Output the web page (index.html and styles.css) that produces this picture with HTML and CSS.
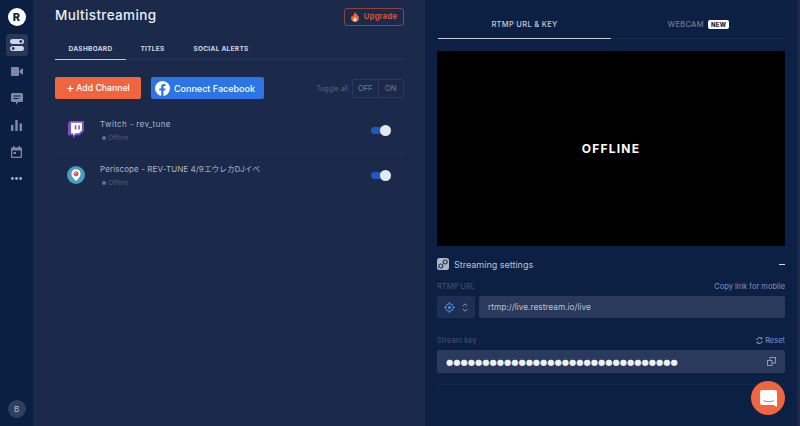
FILE: index.html
```html
<!DOCTYPE html>
<html lang="en">
<head>
    <meta charset="UTF-8">
    <meta name="viewport" content="width=device-width, initial-scale=1.0">
    <title>Multistreaming</title>
    <link rel="stylesheet" href="styles.css">
</head>
<body>
    <div class="app">
        <nav class="sidebar">
            <div class="logo">R</div>
            <a class="nav-item active">
                <svg width="14" height="12" viewBox="0 0 14 12"><rect x="0" y="0" width="14" height="5" rx="2.5" fill="#cfd5e2"/><rect x="0" y="7" width="14" height="5" rx="2.5" fill="#cfd5e2"/><circle cx="10.8" cy="2.5" r="1.4" fill="#26375a"/><circle cx="3.2" cy="9.5" r="1.4" fill="#26375a"/></svg>
            </a>
            <a class="nav-item">
                <svg width="12" height="9" viewBox="0 0 12 9"><rect x="0" y="0" width="8" height="9" rx="1" fill="#7e8aa3"/><path d="M8.6 3.4 12 1v7L8.6 5.6z" fill="#7e8aa3"/></svg>
            </a>
            <a class="nav-item">
                <svg width="12" height="12" viewBox="0 0 12 12"><path d="M1.5 0h9A1.5 1.5 0 0 1 12 1.5v6A1.5 1.5 0 0 1 10.5 9H7l-2 3V9H1.5A1.5 1.5 0 0 1 0 7.5v-6A1.5 1.5 0 0 1 1.5 0z" fill="#7e8aa3"/><path d="M2.5 3h7M2.5 5.5h5" stroke="#0c1f42" stroke-width="1"/></svg>
            </a>
            <a class="nav-item">
                <svg width="11" height="11" viewBox="0 0 11 11"><rect x="0" y="5" width="2.4" height="6" fill="#7e8aa3"/><rect x="4.3" y="0" width="2.4" height="11" fill="#7e8aa3"/><rect x="8.6" y="3.5" width="2.4" height="7.5" fill="#7e8aa3"/></svg>
            </a>
            <a class="nav-item">
                <svg width="11" height="12" viewBox="0 0 11 12"><path d="M1 1.5h9a1 1 0 0 1 1 1V11a1 1 0 0 1-1 1H1a1 1 0 0 1-1-1V2.5a1 1 0 0 1 1-1z" fill="#7e8aa3"/><rect x="2" y="0" width="1.5" height="2.5" fill="#7e8aa3"/><rect x="7.5" y="0" width="1.5" height="2.5" fill="#7e8aa3"/><rect x="1.3" y="4.5" width="8.4" height="6.2" fill="#0c1f42"/><rect x="2.5" y="6" width="2.5" height="2" fill="#7e8aa3"/></svg>
            </a>
            <a class="nav-item">
                <svg width="11" height="3" viewBox="0 0 11 3"><circle cx="1.4" cy="1.5" r="1.4" fill="#aab3c5"/><circle cx="5.5" cy="1.5" r="1.4" fill="#aab3c5"/><circle cx="9.6" cy="1.5" r="1.4" fill="#aab3c5"/></svg>
            </a>
            <div class="avatar">B</div>
        </nav>

        <main class="main">
            <header class="main-header">
                <h1>Multistreaming</h1>
                <a class="upgrade">
                    <svg width="8" height="10" viewBox="0 0 8 10"><path d="M4 0c.4 1.8 4 3.4 4 6.2C8 8.4 6.2 10 4 10S0 8.4 0 6.2C0 5 .7 4 1.4 3.4c.1.8.5 1.2 1 1.3C2.2 3 3 1.2 4 0z" fill="#f0653c"/><path d="M4 5c.3.8 1.6 1.4 1.6 2.7C5.6 8.7 4.9 9.3 4 9.3s-1.6-.6-1.6-1.6C2.4 6.5 3.6 6 4 5z" fill="#f9dcb8"/></svg>
                    Upgrade
                </a>
            </header>

            <div class="tabs">
                <a class="tab active">DASHBOARD</a>
                <a class="tab">TITLES</a>
                <a class="tab">SOCIAL ALERTS</a>
            </div>

            <div class="actions">
                <button class="btn btn-add"><span class="plus">+</span>Add Channel</button>
                <button class="btn btn-fb">
                    <svg width="15" height="15" viewBox="0 0 15 15"><circle cx="7.5" cy="7.5" r="7.5" fill="#fff"/><path d="M8.4 15V9.5h1.8l.3-2.1H8.4V6.1c0-.6.3-1.1 1.2-1.1h.9V3.2s-.8-.1-1.6-.1c-1.7 0-2.7 1-2.7 2.8v1.500H4.300v2.100h1.900V15z" fill="#2d74e4"/></svg>
                    Connect Facebook
                </button>
                <div class="toggle-all">
                    <span>Toggle all</span>
                    <div class="switch-group"><a>OFF</a><a>ON</a></div>
                </div>
            </div>

            <ul class="channels">
                <li class="channel">
                    <svg class="channel-icon" width="17" height="18" viewBox="0 0 17 18"><path d="M2.5 0H17v10l-4.5 4.200H9L6 17.500v-3.300H1V3z" fill="#7b4fd0"/><path d="M4 1.800h11v7.500l-3 2.900H8.500L6 14.500v-2.300H4z" fill="#fff"/><rect x="7.8" y="4.3" width="1.5" height="4.2" fill="#7b4fd0"/><rect x="11.3" y="4.3" width="1.5" height="4.2" fill="#7b4fd0"/></svg>
                    <div class="channel-info">
                        <div class="channel-name">Twitch - rev_tune</div>
                        <div class="channel-status"><i></i>Offline</div>
                    </div>
                    <div class="toggle"><i></i></div>
                </li>
                <li class="channel">
                    <svg class="channel-icon" width="18" height="18" viewBox="0 0 18 18"><circle cx="9" cy="9" r="9" fill="#4b9cc0"/><path d="M9 3.2c2.7 0 4.6 2 4.6 4.5C13.6 10.500 10.500 13.500 9 15 7.500 13.500 4.400 10.500 4.400 7.700 4.400 5.200 6.300 3.200 9 3.200z" fill="#fff"/><circle cx="9" cy="7.800" r="2.500" fill="#e0574f"/><circle cx="8.200" cy="7" r=".8" fill="#fff"/></svg>
                    <div class="channel-info">
                        <div class="channel-name tight">Periscope - REV-TUNE 4/9<span class="jp">エウレカDJイベ</span></div>
                        <div class="channel-status"><i></i>Offline</div>
                    </div>
                    <div class="toggle"><i></i></div>
                </li>
            </ul>
        </main>

        <section class="panel">
            <div class="panel-tabs">
                <a class="panel-tab active">RTMP URL &amp; KEY</a>
                <a class="panel-tab">WEBCAM <span class="badge">NEW</span></a>
            </div>

            <div class="video">OFFLINE</div>

            <div class="settings-head">
                <svg width="12" height="12" viewBox="0 0 12 12"><rect width="12" height="12" rx="2.5" fill="#aeb6c6"/><circle cx="3.8" cy="8" r="2" fill="none" stroke="#26375a" stroke-width="1.2"/><circle cx="8.2" cy="4" r="2" fill="none" stroke="#26375a" stroke-width="1.2"/></svg>
                <span>Streaming settings</span>
                <i class="collapse"></i>
            </div>

            <div class="field-head">
                <label>RTMP URL</label>
                <a>Copy link for mobile</a>
            </div>
            <div class="url-row">
                <div class="server-select">
                    <svg width="11" height="11" viewBox="0 0 11 11"><circle cx="5.5" cy="5.5" r="3.8" fill="none" stroke="#4f8fe8" stroke-width="1"/><circle cx="5.5" cy="5.5" r="1.5" fill="#4f8fe8"/><path d="M5.5 0v2M5.5 9v2M0 5.5h2M9 5.5h2" stroke="#4f8fe8" stroke-width="1"/></svg>
                    <svg width="6" height="9" viewBox="0 0 6 9"><path d="M.8 3 3 .8 5.2 3M.8 6 3 8.2 5.2 6" fill="none" stroke="#8f99ad" stroke-width="1"/></svg>
                </div>
                <div class="input">rtmp://live.restream.io/live</div>
            </div>

            <div class="field-head key-head">
                <label>Stream key</label>
                <a class="reset">
                    <svg width="7" height="7" viewBox="0 0 7 7"><path d="M.7 3A2.9 2.9 0 0 1 5.7 1.5M6.3 4A2.9 2.9 0 0 1 1.3 5.5" fill="none" stroke="#8ea5d2" stroke-width="1"/><path d="M6.3 0v2.3H4zM.7 7V4.7H3z" fill="#8ea5d2"/></svg>
                    Reset
                </a>
            </div>
            <div class="input key-input">
                <span class="dots">●●●●●●●●●●●●●●●●●●●●●●●●●●●●●●●●</span>
                <svg width="9" height="9" viewBox="0 0 9 9"><rect x="3" y=".5" width="5.5" height="5.5" fill="none" stroke="#8f99ad" stroke-width="1"/><rect x=".5" y="3.5" width="4.5" height="5" fill="#2a3a5c" stroke="#8f99ad" stroke-width="1"/></svg>
            </div>
            <div class="panel-rule"></div>
        </section>
    </div>

    <a class="chat">
        <svg width="17" height="17" viewBox="0 0 17 17"><path d="M2 0h13a2 2 0 0 1 2 2v15l-3.5-2H2a2 2 0 0 1-2-2V2a2 2 0 0 1 2-2z" fill="#fff"/><path d="M3.5 10.5c3 1.6 7 1.6 10 0" fill="none" stroke="#ee6540" stroke-width="1"/></svg>
    </a>
</body>
</html>
```

FILE: styles.css
```css
* {
    box-sizing: border-box;
}

html, body {
    height: 100%;
}

body {
    margin: 0;
    overflow: hidden;
    background: #1b2a4a;
    font-family: Inter, "Noto Sans CJK JP", sans-serif;
    color: #fff;
}

ul {
    list-style: none;
    margin: 0;
    padding: 0;
}

.app {
    display: flex;
    height: 426px;
}

/* left icon rail */
.sidebar {
    width: 33px;
    flex-shrink: 0;
    display: flex;
    flex-direction: column;
    align-items: center;
    padding-top: 8px;
    background: #0b1f42;
}

.logo {
    width: 18px;
    height: 18px;
    margin-bottom: 8px;
    border-radius: 50%;
    background: #fff;
    color: #0b1f42;
    font-size: 11px;
    font-weight: 800;
    line-height: 18px;
    text-align: center;
}

.nav-item {
    width: 22px;
    height: 22px;
    margin-bottom: 4.8px;
    display: flex;
    align-items: center;
    justify-content: center;
    border-radius: 3px;
}

.nav-item.active {
    background: #26375a;
}

.avatar {
    width: 18px;
    height: 18px;
    margin-top: auto;
    margin-bottom: 8px;
    border-radius: 50%;
    background: #2f3f60;
    color: #b7bfce;
    font-size: 8px;
    line-height: 18px;
    text-align: center;
}

/* middle column */
.main {
    width: 392px;
    flex-shrink: 0;
    padding: 0 21px 0 22px;
}

.main-header {
    height: 30px;
    display: flex;
    align-items: center;
    justify-content: space-between;
}

h1 {
    margin: 0;
    font-size: 13.5px;
    font-weight: 500;
    letter-spacing: .35px;
    color: #eceff4;
}

.upgrade {
    width: 60px;
    height: 18px;
    margin-top: 3px;
    display: flex;
    align-items: center;
    justify-content: center;
    gap: 5px;
    border: 1px solid #8a4540;
    border-radius: 3px;
    color: #e0593a;
    font-size: 7.5px;
    font-weight: 600;
    letter-spacing: .3px;
}

.tabs {
    height: 30px;
    display: flex;
    border-bottom: 1px solid #25355a;
}

.tab {
    height: 30px;
    padding-top: 8px;
    display: flex;
    align-items: center;
    justify-content: center;
    width: 71px;
    color: #d4d9e3;
    font-size: 6.5px;
    font-weight: 700;
    letter-spacing: .3px;
}

.tab.active {
    border-bottom: 1px solid #c5cad4;
}

.tab:nth-child(2) {
    width: 53px;
}

.tab:nth-child(3) {
    width: 84px;
}

.actions {
    margin-top: 17px;
    display: flex;
    align-items: center;
}

.btn {
    height: 22px;
    display: flex;
    align-items: center;
    justify-content: center;
    border: 0;
    border-radius: 2px;
    color: #fff;
    font-family: inherit;
    font-size: 8.7px;
    font-weight: 500;
    white-space: nowrap;
}

.btn-add {
    width: 86px;
    margin-right: 10px;
    background: #f0653f;
}

.plus {
    margin-right: 2px;
    font-size: 12px;
    line-height: 1;
}

.btn-fb {
    width: 113px;
    justify-content: flex-start;
    gap: 4px;
    padding-left: 4px;
    background: #2d74e4;
    font-size: 9px;
}

.toggle-all {
    margin-left: auto;
    display: flex;
    align-items: center;
    gap: 4px;
    color: #56637e;
    font-size: 7px;
}

.switch-group {
    width: 52px;
    height: 19px;
    display: flex;
    border: 1px solid #2c3b5c;
    border-radius: 2px;
}

.switch-group a {
    flex: 1;
    display: flex;
    align-items: center;
    justify-content: center;
    color: #707c95;
    font-size: 7.5px;
}

.switch-group a + a {
    border-left: 1px solid #2c3b5c;
}

.channels {
    margin-top: 11px;
}

.channel {
    height: 44px;
    display: flex;
    align-items: center;
    padding: 0 12px;
    border-bottom: 1px solid #21304f;
}

.channel:last-child {
    border-bottom: 0;
}

.channel-icon {
    flex-shrink: 0;
    margin-top: -3px;
}

.channel-info {
    margin-left: 15px;
    margin-top: -3px;
}

.channel:first-child .channel-info {
    margin-left: 16px;
}

.channel-name {
    color: #aeb5c4;
    font-size: 8px;
    letter-spacing: .35px;
}

.channel-name.tight {
    letter-spacing: .1px;
}

.jp {
    font-size: 7.7px;
    letter-spacing: 0;
}

.channel-status {
    margin-top: 5px;
    display: flex;
    align-items: center;
    gap: 2px;
    padding-left: 2px;
    color: #4f5c77;
    font-size: 6.5px;
}

.channel-status i {
    flex-shrink: 0;
    width: 4px;
    height: 4px;
    border-radius: 50%;
    background: #66718a;
}

.toggle {
    position: relative;
    width: 16px;
    height: 7px;
    margin-left: auto;
    margin-right: 5px;
    margin-top: -2px;
    border-radius: 4px;
    background: #2357bb;
}

.toggle i {
    position: absolute;
    top: -2px;
    right: -3.5px;
    width: 11px;
    height: 11px;
    border-radius: 50%;
    background: #e6e8ef;
}

/* right column */
.panel {
    width: 372px;
    flex-shrink: 0;
    padding: 0 12px;
    background: #0c2044;
}

.panel-tabs {
    height: 39px;
    display: flex;
    border-bottom: 1px solid #1b2c50;
}

.panel-tab {
    height: 39px;
    padding-top: 10px;
    display: flex;
    align-items: center;
    justify-content: center;
    gap: 4px;
    width: 174px;
    margin-left: 1px;
    color: #6d7a94;
    font-size: 7.5px;
    font-weight: 500;
    letter-spacing: .3px;
}

.panel-tab.active {
    color: #c6cbd6;
    border-bottom: 1px solid #c6cbd6;
}

.badge {
    padding: 1px 3px;
    border-radius: 2px;
    background: #fff;
    color: #13264a;
    font-size: 6px;
    font-weight: 800;
}

.video {
    height: 195px;
    margin-top: 12px;
    display: flex;
    align-items: center;
    justify-content: center;
    background: #000;
    font-size: 12px;
    font-weight: 700;
    letter-spacing: 1.2px;
}

.settings-head {
    margin-top: 12px;
    height: 12px;
    display: flex;
    align-items: center;
    gap: 5px;
    color: #b9c0ce;
    font-size: 9px;
}

.collapse {
    width: 6px;
    height: 1px;
    margin-left: auto;
    background: #d5d9e2;
}

.field-head {
    margin-top: 10px;
    height: 12px;
    display: flex;
    align-items: center;
    justify-content: space-between;
    color: #46536e;
    font-size: 7.5px;
}

.field-head a {
    color: #7d94c4;
    display: flex;
    align-items: center;
    gap: 2px;
}

.url-row {
    margin-top: 4px;
    display: flex;
    gap: 4px;
}

.server-select {
    width: 38px;
    height: 22px;
    display: flex;
    align-items: center;
    justify-content: center;
    gap: 7px;
    border-radius: 2px;
    background: #1d3054;
}

.input {
    flex: 1;
    height: 22px;
    display: flex;
    align-items: center;
    padding: 0 9px;
    border-radius: 2px;
    background: #2a3a5c;
    color: #b9c0ce;
    font-size: 8.3px;
}

.key-head {
    margin-top: 16px;
}

.key-input {
    margin-top: 4px;
    height: 23px;
    justify-content: space-between;
}

.dots {
    color: #eef0f4;
    font-family: "DejaVu Sans", sans-serif;
    font-size: 8.3px;
}

.panel-rule {
    margin-top: 11px;
    height: 1px;
    background: #15274a;
}

/* chat launcher */
.chat {
    position: absolute;
    left: 751px;
    top: 381px;
    width: 34px;
    height: 34px;
    display: flex;
    align-items: center;
    justify-content: center;
    border-radius: 50%;
    background: #ee6540;
}
```
